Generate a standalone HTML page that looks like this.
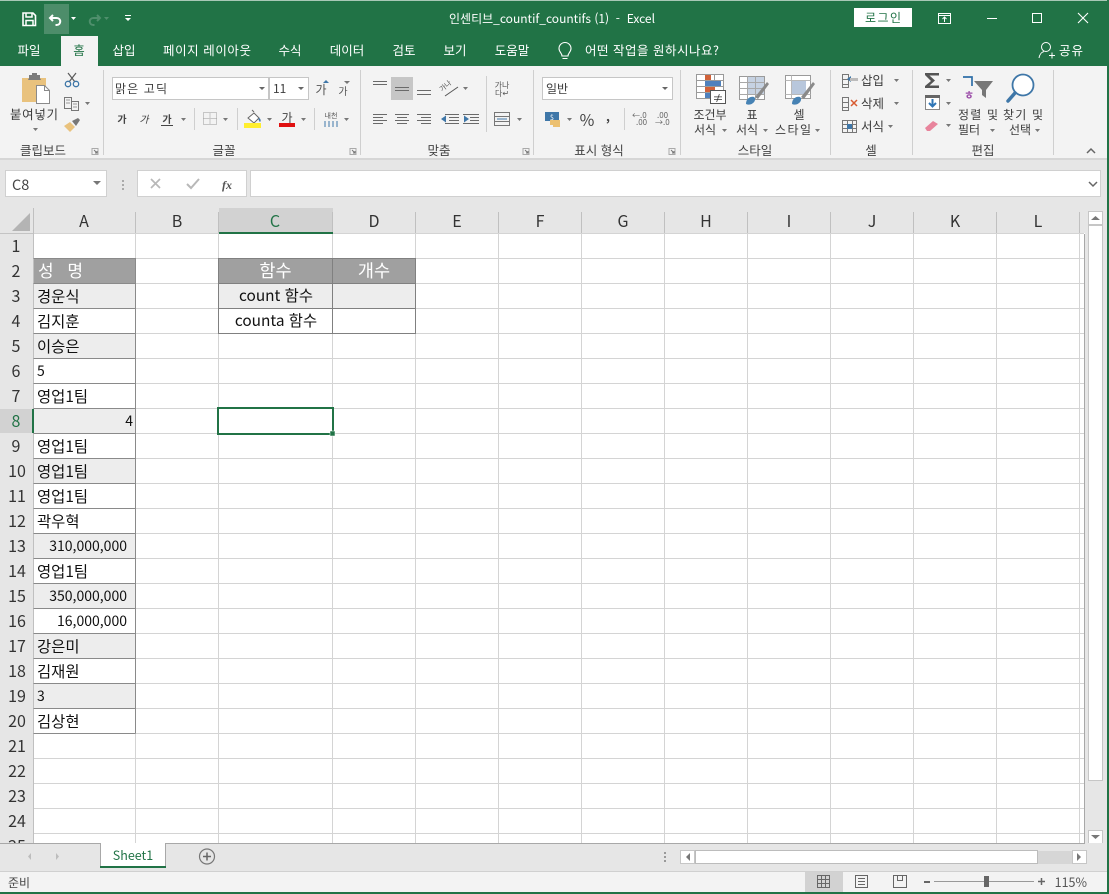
<!DOCTYPE html>
<html lang="ko"><head><meta charset="utf-8"><title>Excel</title>
<style>
html,body{margin:0;padding:0;background:#fff;width:1109px;height:894px;overflow:hidden}
svg{display:block;position:absolute;left:0;top:0}
text{font-family:"Noto Sans CJK KR","Liberation Sans",sans-serif;fill:#444;font-size:12.5px}
.w{fill:#fff}.tab{fill:#fff;font-size:12.5px}
.c{font-size:15.4px;fill:#111}.n{font-size:14px;fill:#111}.m{text-anchor:middle}.e{text-anchor:end}
.h{font-size:16px;fill:#333;text-anchor:middle}
.r{font-size:12px;fill:#3c3c3c}.g{font-size:12.5px;fill:#444;text-anchor:middle}
</style></head><body>
<svg width="1109" height="894" viewBox="0 0 1109 894" xmlns="http://www.w3.org/2000/svg">
<!-- frame backgrounds -->
<rect width="1109" height="894" fill="#fff"/>
<rect width="1109" height="66" fill="#217346"/>
<rect width="1109" height="1" fill="#a8c8b6"/>
<rect y="66" width="1109" height="92" fill="#f3f3f3"/>
<rect y="158" width="1109" height="2" fill="#d6d6d6"/>
<rect y="160" width="1109" height="48" fill="#e6e6e6"/>

<!-- QAT -->
<rect x="44" y="4" width="25" height="30" fill="#4d8d6a"/>
<g fill="none" stroke="#fff" stroke-width="1.6">
<path d="M23 13h10l2.500 2.500V25.500H23z"/><path d="M26 13v4h6v-4M26 25.500v-5h7v5" stroke-width="1.500"/>
<path d="M53 15l-3 3 3 3M50.500 18h6c5 0 5 7 0 7h-1" stroke-width="2"/>
</g>
<path d="M71 17h5l-2.500 3z" fill="#fff"/>
<g fill="none" stroke="#4f8f6c" stroke-width="2"><path d="M97 15l3 3-3 3M99.500 18h-6c-5 0-5 7 0 7h1"/></g>
<path d="M104 17h5l-2.500 3z" fill="#4f8f6c"/>
<path d="M125 15h6v1h-6zM125 18h6l-3 3z" fill="#fff"/>

<text x="449" y="23" class="w" style="font-size:12px" textLength="206" lengthAdjust="spacing" xml:space="preserve">인센티브_countif_countifs (1)  -  Excel</text>

<!-- window controls -->
<rect x="854" y="8" width="58" height="19" fill="#fff"/>
<text x="883" y="22" class="m" style="font-size:12px;fill:#217346" textLength="36">로그인</text>
<g fill="none" stroke="#fff" stroke-width="1">
<path d="M938.500 13.500h12v10h-12zM938.500 15.500h12M944.500 22v-5M942.500 19l2-2 2 2"/>
<path d="M987 18.500h10"/><path d="M1032.500 13.500h9v9h-9z"/><path d="M1078 13l10 10M1088 13l-10 10" stroke-width="1.100"/>
</g>

<!-- tabs -->
<rect x="61" y="36" width="37" height="30" fill="#f3f3f3"/>
<text x="29" y="55" class="tab m">파일</text>
<text x="79" y="55" class="m" style="fill:#217346;font-size:12.5px">홈</text>
<text x="124" y="55" class="tab m">삽입</text>
<text x="207" y="55" class="tab m" textLength="88">페이지 레이아웃</text>
<text x="290" y="55" class="tab m">수식</text>
<text x="347" y="55" class="tab m">데이터</text>
<text x="404" y="55" class="tab m">검토</text>
<text x="455" y="55" class="tab m">보기</text>
<text x="512" y="55" class="tab m">도움말</text>
<path d="M562 56c0-3-3-4-3-7.500a6 6 0 0 1 12 0c0 3.500-3 4.500-3 7.500zM562.500 58.500h5" fill="none" stroke="#fff" stroke-width="1.100"/>
<text x="585" y="55" class="tab" textLength="134">어떤 작업을 원하시나요?</text>
<circle cx="1046" cy="47" r="4.500" fill="none" stroke="#fff"/>
<path d="M1039 58c1-5 3-6 5-6.500M1049 55.500h6M1052 52.500v6" fill="none" stroke="#fff"/>
<text x="1059" y="55" class="tab" textLength="24">공유</text>

<!-- group separators -->
<g fill="#cfcfcf">
<rect x="103" y="70" width="1" height="85"/><rect x="360" y="70" width="1" height="85"/><rect x="533" y="70" width="1" height="85"/>
<rect x="680" y="70" width="1" height="85"/><rect x="830" y="70" width="1" height="85"/><rect x="912" y="70" width="1" height="85"/><rect x="1053" y="70" width="1" height="85"/>
<rect x="486" y="76" width="1" height="56"/><rect x="194" y="108" width="1" height="22"/><rect x="237" y="108" width="1" height="22"/><rect x="314" y="108" width="1" height="22"/><rect x="624" y="108" width="1" height="22"/>
</g>

<!-- clipboard -->
<path d="M22 78h24v24H36v0H22z" fill="#e9c27d"/>
<path d="M29 78v-3h3v-2h5v2h3v3l1 2H28z" fill="#7b7b7b"/>
<path d="M36.500 85.500h8l5 5v13h-13z" fill="#fff" stroke="#8a8a8a"/>
<path d="M44.500 85.500v5h5" fill="none" stroke="#8a8a8a"/>
<text x="34" y="119" class="m" style="font-size:12.500px;fill:#3c3c3c" textLength="48">붙여넣기</text>
<path d="M33 128h5l-2.500 3z" fill="#777"/>
<g fill="none" stroke="#5a5a5a" stroke-width="1.200">
<path d="M68 73l7 9M76 73l-7 9"/></g>
<circle cx="68" cy="84" r="2.700" fill="none" stroke="#3f77a8" stroke-width="1.300"/><circle cx="76" cy="84" r="2.700" fill="none" stroke="#3f77a8" stroke-width="1.300"/>
<g fill="none" stroke="#777"><path d="M64.500 97.500h7v11h-7zM71.500 101.500h7v9h-7z"/><path d="M66 100h4M66 103h4M73 104h4M73 107h4" stroke="#999"/></g>
<path d="M85 102h5l-2.500 3z" fill="#777"/>
<path d="M64 126l6-4 5 5-5 5z" fill="#e9c27d"/><path d="M72 121l6-3 2 2-4 6z" fill="#777"/>
<text x="43" y="155" class="g">클립보드</text>
<path d="M92 148.500h6v6h-6z" fill="none" stroke="#aaa"/><path d="M94 150l3 3M97 151v2h-2" fill="none" stroke="#777"/>

<!-- font -->
<rect x="112.500" y="77.500" width="156" height="22" fill="#fff" stroke="#c6c6c6"/>
<rect x="269.500" y="77.500" width="39" height="22" fill="#fff" stroke="#c6c6c6"/>
<text x="115" y="93" class="r" textLength="52">맑은 고딕</text><text x="273" y="93" class="r">11</text>
<path d="M259 87h6l-3 3zM298 87h6l-3 3z" fill="#666"/>
<text x="321" y="94" class="m" style="font-size:12px;fill:#555">가</text><path d="M323 83l3-3 3 3z" fill="#3f77a8"/>
<text x="343" y="95" class="m" style="font-size:10px;fill:#555">가</text><path d="M344 81h6l-3 3z" fill="#777"/>
<text x="122" y="123" class="m" style="font-size:10px;font-weight:700;fill:#444">가</text>
<text x="144" y="123" class="m" style="font-size:10px;font-style:italic;fill:#444">가</text>
<text x="167" y="123" class="m" style="font-size:10px;font-weight:700;fill:#444">가</text><rect x="161" y="125" width="12" height="1" fill="#444"/>
<path d="M181 118h5l-2.500 3zM223 118h5l-2.500 3zM267 118h5l-2.500 3zM301 118h5l-2.500 3zM344 118h5l-2.500 3z" fill="#777"/>
<path d="M203.500 112.500h13v12h-13zM210 112.500v12M203.500 118.500h13" fill="none" stroke="#999" stroke-dasharray="1 1"/>
<path d="M248 118l6-5 5 5-5 5z" fill="#fff" stroke="#666"/><path d="M254 112l-2-2" stroke="#666"/><path d="M259 118c2 1 2 3 1 4-1-1-2-3-1-4z" fill="#3f77a8"/>
<rect x="244" y="123" width="17" height="5" fill="#ffee2e"/>
<text x="287" y="122" class="m" style="font-size:12px;fill:#444">가</text><rect x="279" y="123" width="16" height="4" fill="#e01010"/>
<text x="331" y="118" class="m" style="font-size:7px;fill:#555">내천</text><path d="M325 127v-6M329 127v-6M333 127v-6M337 127v-6" stroke="#3f77a8"/>
<text x="224" y="155" class="g">글꼴</text>
<path d="M350 148.500h6v6h-6z" fill="none" stroke="#aaa"/><path d="M352 150l3 3M355 151v2h-2" fill="none" stroke="#777"/>

<!-- alignment -->
<rect x="391" y="77" width="22" height="23" fill="#c6c6c6"/>
<g stroke="#6a6a6a" fill="none">
<path d="M373 81.500h14M373 84.500h14M395 87.500h14M395 90.500h14M417 90.500h14M417 94.500h14"/>
<path d="M373 114.500h14M373 117.500h10M373 120.500h14M373 123.500h10M395 114.500h14M397 117.500h10M395 120.500h14M397 123.500h10M417 114.500h14M421 117.500h10M417 120.500h14M421 123.500h10"/>
<path d="M445 114.500h14M445 123.500h14M449 117.500h10M449 120.500h10M463 114.500h16M463 123.500h16M470 117.500h9M470 120.500h9"/>
</g>
<path d="M441 119l5-3.500v7zM469 119l-5-3.500v7z" fill="#3f77a8"/>
<path d="M445 96l13-9" stroke="#555" fill="none"/>
<text x="442" y="92" style="font-size:7px;fill:#555" transform="rotate(-40 442 92)">가나</text>
<path d="M463 87h5l-2.500 3z" fill="#777"/>
<text x="502" y="88" class="m" style="font-size:8px;fill:#555">가나</text><text x="502" y="96" class="m" style="font-size:8px;fill:#555">다↵</text>
<path d="M494.500 112.500h15v13h-15zM494.500 116.500h15M494.500 121.500h15" fill="none" stroke="#777"/>
<path d="M497 119h10" stroke="#3f77a8"/>
<path d="M517 118h5l-2.500 3z" fill="#777"/>
<text x="439" y="155" class="g">맞춤</text>
<path d="M523 148.500h6v6h-6z" fill="none" stroke="#aaa"/><path d="M525 150l3 3M528 151v2h-2" fill="none" stroke="#777"/>

<!-- number -->
<rect x="542.500" y="77.500" width="130" height="22" fill="#fff" stroke="#c6c6c6"/>
<text x="546" y="93" class="r">일반</text>
<path d="M662 87h6l-3 3z" fill="#666"/>
<rect x="545" y="112" width="14" height="9" fill="#3f77a8"/><text x="552" y="120" class="m" style="font-size:7px;fill:#fff">$</text>
<path d="M550 120h10v5h-10zM553 123h7v4h-7z" fill="#ecc070"/>
<path d="M567 118h5l-2.500 3z" fill="#777"/>
<text x="587" y="126" class="m" style="font-size:16px;fill:#444">%</text>
<text x="608" y="121" class="m" style="font-size:12px;font-weight:700;fill:#444">,</text>
<text x="632" y="118" style="font-size:8px;fill:#666">←.0</text><text x="636" y="125" style="font-size:8px;fill:#666">.00</text>
<text x="657" y="118" style="font-size:8px;fill:#666">.00</text><text x="655" y="125" style="font-size:8px;fill:#666">→.0</text>
<text x="599" y="155" class="g">표시 형식</text>
<path d="M669 148.500h6v6h-6z" fill="none" stroke="#aaa"/><path d="M671 150l3 3M674 151v2h-2" fill="none" stroke="#777"/>

<!-- styles -->
<path d="M696.500 74.500h27v24h-27zM696.500 80.500h27M696.500 86.500h27M696.500 92.500h27M705.500 74.500v24M714.500 74.500v24" fill="#fff" stroke="#9a9a9a"/>
<rect x="705" y="75" width="6" height="5" fill="#d0623a"/><rect x="705" y="81" width="16" height="5" fill="#4f81bd"/><rect x="705" y="87" width="10" height="5" fill="#d0623a"/><rect x="705" y="93" width="6" height="5" fill="#4f81bd"/>
<path d="M710.500 90.500h15v13h-15z" fill="#fff" stroke="#555"/><text x="718" y="102" class="m" style="font-size:11px;fill:#333">≠</text>
<text x="710" y="119" class="m" style="font-size:12px;fill:#3c3c3c">조건부</text><text x="705" y="134" class="m" style="font-size:12px;fill:#3c3c3c">서식</text>
<path d="M722 129h5l-2.500 3z" fill="#777"/>
<path d="M739.500 76.500h25v23h-25z" fill="#fff" stroke="#9a9a9a"/>
<rect x="748" y="77" width="16" height="17" fill="#c6d2e2"/>
<path d="M739.500 82.500h25M739.500 88.500h25M739.500 94.500h25M747.500 76.500v23M755.500 76.500v23" fill="none" stroke="#a8a8a8"/>
<path d="M746 104c0-6 5-8 8-7 2 1 1 5-1 6-2 2-5 2-7 1z" fill="#4682b4"/><path d="M755 97l12-15 2 2-11 15z" fill="#8a8a8a"/>
<text x="752" y="119" class="m" style="font-size:12px;fill:#3c3c3c">표</text><text x="747" y="134" class="m" style="font-size:12px;fill:#3c3c3c">서식</text>
<path d="M763 129h5l-2.500 3z" fill="#777"/>
<path d="M785.500 75.500h25v23h-25z" fill="#fff" stroke="#9a9a9a"/><rect x="791" y="80" width="15" height="14" fill="#b8c7dc"/>
<path d="M785.500 80.500h25M785.500 94.500h25M791.500 75.500v23" fill="none" stroke="#b8b8b8"/>
<path d="M792 104c0-6 5-8 8-7 2 1 1 5-1 6-2 2-5 2-7 1z" fill="#4682b4"/><path d="M801 97l12-15 2 2-11 15z" fill="#8a8a8a"/>
<text x="799" y="119" class="m" style="font-size:12px;fill:#3c3c3c">셀</text><text x="793" y="134" class="m" style="font-size:12px;fill:#3c3c3c" textLength="36">스타일</text>
<path d="M815 129h5l-2.500 3z" fill="#777"/>
<text x="755" y="155" class="g">스타일</text>

<!-- cells -->
<g fill="none" stroke="#777">
<path d="M842.500 74.500h6v5h-6zM842.500 79.500h6v5h-6zM842.500 84.500h6v3h-6zM850 79.500h7"/>
<path d="M842.500 97.500h6v5h-6zM842.500 102.500h6v5h-6zM842.500 107.500h6v3h-6z"/>
<path d="M842.500 120.500h14v12h-14zM842.500 124.500h14M842.500 128.500h14M847.500 120.500v12M852.500 120.500v12"/>
</g>
<path d="M847 79l4-3v6z" fill="#3f77a8"/><rect x="850" y="78" width="8" height="3" fill="#bbb"/>
<path d="M851 100l6 6M857 100l-6 6" stroke="#d85a30" stroke-width="1.500"/>
<rect x="847" y="124" width="5" height="5" fill="#3f77a8"/>
<text x="861" y="85" style="font-size:12.500px;fill:#3c3c3c">삽입</text><text x="861" y="108" style="font-size:12.500px;fill:#3c3c3c">삭제</text><text x="861" y="131" style="font-size:12.500px;fill:#3c3c3c">서식</text>
<path d="M894 79h5l-2.500 3zM894 102h5l-2.500 3zM888 125h5l-2.500 3z" fill="#777"/>
<text x="871" y="155" class="g">셀</text>

<!-- edit -->
<path d="M925 73h14v2.500h-9.500l5.500 5-5.500 5H939V88H925v-2l6-5-6-6z" fill="#555"/>
<path d="M946 79h5l-2.500 3zM946 102h5l-2.500 3zM946 124h5l-2.500 3z" fill="#777"/>
<path d="M925.500 95.500h14v14h-14z" fill="#fff" stroke="#888"/><rect x="925" y="95" width="15" height="3" fill="#666"/>
<path d="M932.500 99v7M929 103l3.500 3.500L936 103" fill="none" stroke="#2e75b6" stroke-width="2"/>
<path d="M925 128l8-7 5 3-8 7h-3z" fill="#e8849c"/>
<path d="M963 77h9v9" fill="none" stroke="#2f6fa8" stroke-width="1.700"/>
<text x="969" y="99" class="m" style="font-size:11px;font-weight:700;fill:#9b4da8">ㅎ</text>
<path d="M974 81h19l-7 9v8l-4-3v-5z" fill="#777"/>
<circle cx="1023" cy="85" r="10.500" fill="#fff" stroke="#3f77a8" stroke-width="1.800"/>
<path d="M1015 93l-7 8" stroke="#3f77a8" stroke-width="3.500" stroke-linecap="round"/>
<text x="978" y="119" class="m" style="font-size:12px;fill:#3c3c3c" textLength="40">정렬 및</text><text x="969" y="134" class="m" style="font-size:12px;fill:#3c3c3c">필터</text>
<path d="M990 129h5l-2.500 3z" fill="#777"/>
<text x="1023" y="119" class="m" style="font-size:12px;fill:#3c3c3c" textLength="40">찾기 및</text><text x="1020" y="134" class="m" style="font-size:12px;fill:#3c3c3c">선택</text>
<path d="M1035 129h5l-2.500 3z" fill="#777"/>
<text x="983" y="155" class="g">편집</text>
<path d="M1087 153l4-4 4 4" fill="none" stroke="#666" stroke-width="1.500"/>

<!-- formula bar -->
<rect x="5.500" y="170.500" width="101" height="26" fill="#fff" stroke="#d0d0d0"/>
<text x="12" y="190" style="font-size:14.500px;fill:#444">C8</text>
<path d="M93 181h8l-4 4z" fill="#777"/>
<path d="M122 180h2v2h-2zM122 184h2v2h-2zM122 188h2v2h-2z" fill="#aaa"/>
<rect x="137.500" y="170.500" width="109" height="26" fill="#fff" stroke="#d0d0d0"/>
<path d="M151 179l9 9M160 179l-9 9" stroke="#b8b8b8" stroke-width="1.700"/>
<path d="M187 184l4 4 8-9" fill="none" stroke="#b8b8b8" stroke-width="2"/>
<text x="222" y="189" style="font:italic 700 12px 'Liberation Serif',serif;fill:#555">fx</text>
<rect x="250.500" y="170.500" width="850" height="26" fill="#fff" stroke="#d0d0d0"/>
<path d="M1089 182l4 4 4-4" fill="none" stroke="#666" stroke-width="1.500"/>

<!-- headers -->
<rect y="208" width="1085" height="25" fill="#e6e6e6"/>
<rect y="233" width="33" height="610" fill="#e6e6e6"/>
<rect x="219" y="208" width="114" height="25" fill="#d2d2d2"/>
<rect y="409" width="33" height="24" fill="#d2d2d2"/>
<path d="M30 213v18H12z" fill="#b4b4b4"/>
<!-- cell fills -->
<g fill="#ededed">
<rect x="34" y="284" width="101" height="24"/><rect x="34" y="334" width="101" height="24"/><rect x="34" y="409" width="101" height="24"/><rect x="34" y="459" width="101" height="24"/><rect x="34" y="534" width="101" height="24"/><rect x="34" y="584" width="101" height="24"/><rect x="34" y="634" width="101" height="24"/><rect x="34" y="684" width="101" height="24"/>
<rect x="219" y="284" width="196" height="24"/>
</g>
<rect x="34" y="259" width="101" height="24" fill="#a0a0a0"/><rect x="219" y="259" width="196" height="24" fill="#a0a0a0"/>
<!-- gridlines -->
<g fill="#d4d4d4">
<rect x="34" y="233" width="1050" height="1"/><rect x="0" y="233" width="34" height="1" fill="#c4c4c4"/>
<rect x="34" y="258" width="1050" height="1"/><rect x="34" y="283" width="1050" height="1"/><rect x="34" y="308" width="1050" height="1"/><rect x="34" y="333" width="1050" height="1"/><rect x="34" y="358" width="1050" height="1"/><rect x="34" y="383" width="1050" height="1"/><rect x="34" y="408" width="1050" height="1"/><rect x="34" y="433" width="1050" height="1"/><rect x="34" y="458" width="1050" height="1"/><rect x="34" y="483" width="1050" height="1"/><rect x="34" y="508" width="1050" height="1"/><rect x="34" y="533" width="1050" height="1"/><rect x="34" y="558" width="1050" height="1"/><rect x="34" y="583" width="1050" height="1"/><rect x="34" y="608" width="1050" height="1"/><rect x="34" y="633" width="1050" height="1"/><rect x="34" y="658" width="1050" height="1"/><rect x="34" y="683" width="1050" height="1"/><rect x="34" y="708" width="1050" height="1"/><rect x="34" y="733" width="1050" height="1"/><rect x="34" y="758" width="1050" height="1"/><rect x="34" y="783" width="1050" height="1"/><rect x="34" y="808" width="1050" height="1"/><rect x="34" y="833" width="1050" height="1"/>
<rect x="135" y="234" width="1" height="609"/><rect x="218" y="234" width="1" height="609"/><rect x="332" y="234" width="1" height="609"/><rect x="415" y="234" width="1" height="609"/><rect x="498" y="234" width="1" height="609"/><rect x="581" y="234" width="1" height="609"/><rect x="664" y="234" width="1" height="609"/><rect x="747" y="234" width="1" height="609"/><rect x="830" y="234" width="1" height="609"/><rect x="913" y="234" width="1" height="609"/><rect x="996" y="234" width="1" height="609"/><rect x="1079" y="234" width="1" height="609"/>
</g>
<!-- header separators -->
<g fill="#c0c0c0">
<rect x="33" y="208" width="1" height="635"/>
<rect x="135" y="212" width="1" height="21"/><rect x="218" y="212" width="1" height="21"/><rect x="332" y="212" width="1" height="21"/><rect x="415" y="212" width="1" height="21"/><rect x="498" y="212" width="1" height="21"/><rect x="581" y="212" width="1" height="21"/><rect x="664" y="212" width="1" height="21"/><rect x="747" y="212" width="1" height="21"/><rect x="830" y="212" width="1" height="21"/><rect x="913" y="212" width="1" height="21"/><rect x="996" y="212" width="1" height="21"/><rect x="1079" y="212" width="1" height="21"/>
</g>
<rect x="219" y="232" width="114" height="2" fill="#217346"/>
<rect x="32" y="409" width="2" height="24" fill="#217346"/>
<!-- table borders -->
<path d="M33.500 258.500h102v475M33.500 283.500h102M33.500 308.500h102M33.500 333.500h102M33.500 358.500h102M33.500 383.500h102M33.500 408.500h102M33.500 433.500h102M33.500 458.500h102M33.500 483.500h102M33.500 508.500h102M33.500 533.500h102M33.500 558.500h102M33.500 583.500h102M33.500 608.500h102M33.500 633.500h102M33.500 658.500h102M33.500 683.500h102M33.500 708.500h102M33.500 733.500h102" fill="none" stroke="#8a8a8a"/>
<path d="M218.500 258.500h197v75h-197zM218.500 283.500h197M218.500 308.500h197M332.500 258.500v75" fill="none" stroke="#808080"/>

<!-- column letters -->
<text x="84" y="227" class="h">A</text><text x="177" y="227" class="h">B</text><text x="275" y="227" class="h" style="fill:#217346">C</text><text x="374" y="227" class="h">D</text><text x="457" y="227" class="h">E</text><text x="540" y="227" class="h">F</text><text x="623" y="227" class="h">G</text><text x="706" y="227" class="h">H</text><text x="789" y="227" class="h">I</text><text x="872" y="227" class="h">J</text><text x="955" y="227" class="h">K</text><text x="1038" y="227" class="h">L</text>
<!-- row numbers -->
<text x="16" y="252" class="h">1</text><text x="16" y="277" class="h">2</text><text x="16" y="302" class="h">3</text><text x="16" y="327" class="h">4</text><text x="16" y="352" class="h">5</text><text x="16" y="377" class="h">6</text><text x="16" y="402" class="h">7</text><text x="16" y="427" class="h" style="fill:#217346">8</text><text x="16" y="452" class="h">9</text><text x="17" y="477" class="h">10</text><text x="17" y="502" class="h">11</text><text x="17" y="527" class="h">12</text><text x="17" y="552" class="h">13</text><text x="17" y="577" class="h">14</text><text x="17" y="602" class="h">15</text><text x="17" y="627" class="h">16</text><text x="17" y="652" class="h">17</text><text x="17" y="677" class="h">18</text><text x="17" y="702" class="h">19</text><text x="17" y="727" class="h">20</text><text x="17" y="752" class="h">21</text><text x="17" y="777" class="h">22</text><text x="17" y="802" class="h">23</text><text x="17" y="827" class="h">24</text><text x="17" y="852" class="h">25</text>

<!-- cell text -->
<text x="38" y="277" style="fill:#fff;font-size:17px" textLength="45" lengthAdjust="spacing" xml:space="preserve">성  명</text>
<text x="37" y="302" class="c">경운식</text><text x="37" y="327" class="c">김지훈</text><text x="37" y="352" class="c">이승은</text><text x="37" y="376" class="n">5</text><text x="37" y="402" class="c">영업1팀</text>
<text x="133" y="426" class="n e">4</text>
<text x="37" y="452" class="c">영업1팀</text><text x="37" y="477" class="c">영업1팀</text><text x="37" y="502" class="c">영업1팀</text><text x="37" y="527" class="c">곽우혁</text>
<text x="127" y="551" class="n e">310,000,000</text><text x="37" y="577" class="c">영업1팀</text><text x="127" y="601" class="n e">350,000,000</text><text x="127" y="626" class="n e">16,000,000</text>
<text x="37" y="652" class="c">강은미</text><text x="37" y="677" class="c">김재원</text><text x="37" y="701" class="n">3</text><text x="37" y="727" class="c">김상현</text>
<text x="275.500" y="277" class="m" style="fill:#fff;font-size:17.500px">함수</text><text x="374" y="277" class="m" style="fill:#fff;font-size:17.500px">개수</text>
<text x="276" y="301" class="c m">count 함수</text><text x="276" y="326" class="c m">counta 함수</text>

<!-- selection -->
<rect x="218" y="408" width="115" height="26" fill="none" stroke="#217346" stroke-width="2"/>
<rect x="330" y="431" width="5" height="5" fill="#217346" stroke="#fff" stroke-width=".5"/>

<!-- scrollbar right -->
<rect x="1085" y="208" width="24" height="636" fill="#e6e6e6"/>
<rect x="1084" y="234" width="1" height="610" fill="#a8a8a8"/>
<rect x="1088.500" y="211.500" width="14" height="13" fill="#fff" stroke="#c6c6c6"/>
<path d="M1091 220l4.500-4 4.500 4z" fill="#777"/>
<rect x="1088.500" y="225.500" width="14" height="555" fill="#fff" stroke="#c6c6c6"/>
<rect x="1088.500" y="830.500" width="14" height="13" fill="#fff" stroke="#c6c6c6"/>
<path d="M1091 835l4.500 4 4.500-4z" fill="#777"/>

<!-- sheet bar -->
<rect y="843" width="1109" height="28" fill="#e6e6e6"/>
<rect y="843" width="1085" height="1" fill="#a8a8a8"/>
<path d="M31 853v7l-3-3.500zM56 853v7l3-3.500z" fill="#bdbdbd"/>
<path d="M100.500 843.500v23M165.500 843.500v23" stroke="#a8a8a8" fill="none"/>
<rect x="101" y="843" width="64" height="24" fill="#fff"/>
<rect x="100" y="866" width="66" height="2" fill="#217346"/>
<text x="133" y="860" class="m" style="font-size:12.500px;fill:#217346">Sheet1</text>
<circle cx="207" cy="856.500" r="7.500" fill="none" stroke="#777" stroke-width="1.200"/><path d="M203 856.500h8M207 852.500v8" stroke="#666" stroke-width="1.500"/>
<path d="M664 852h2v2h-2zM664 856h2v2h-2zM664 860h2v2h-2z" fill="#999"/>
<rect x="680.500" y="850.500" width="14" height="13" fill="#fff" stroke="#c6c6c6"/><path d="M690 853v8l-4-4z" fill="#777"/>
<rect x="695.500" y="850.500" width="342" height="13" fill="#fff" stroke="#bcbcbc"/>
<rect x="1038" y="851" width="34" height="13" fill="#d6d6d6"/>
<rect x="1072.500" y="850.500" width="14" height="13" fill="#fff" stroke="#c6c6c6"/><path d="M1077 853v8l4-4z" fill="#777"/>

<!-- status -->
<rect y="871" width="1109" height="21" fill="#f3f3f3"/>
<rect y="871" width="1109" height="1" fill="#d0d0d0"/>
<rect x="805" y="872" width="38" height="20" fill="#d2d2d2"/>
<text x="8" y="887" style="font-size:12px;fill:#444">준비</text>
<path d="M817.500 875.500h12v12h-12zM821.500 875.500v12M825.500 875.500v12M817.500 879.500h12M817.500 883.500h12" fill="none" stroke="#666"/>
<path d="M855.500 875.500h12v12h-12zM858 878.500h7M858 881.500h7M858 884.500h7" fill="none" stroke="#666"/>
<path d="M893.500 875.500h13v12h-13zM897.500 875.500v5h5v-5" fill="none" stroke="#666"/>
<rect x="924" y="881" width="6" height="2" fill="#666"/>
<rect x="934" y="881" width="100" height="1" fill="#999"/>
<rect x="984" y="876" width="5" height="11" fill="#666"/>
<path d="M1038 881.500h7M1041.500 878v7" stroke="#666" stroke-width="1.500"/>
<text x="1087" y="887" class="e" style="font-size:12.500px;fill:#555">115%</text>

<!-- window edge -->
<rect x="1107" y="0" width="2" height="894" fill="#217346"/>
<rect x="0" y="892" width="1109" height="2" fill="#217346"/>
</svg>
</body></html>
